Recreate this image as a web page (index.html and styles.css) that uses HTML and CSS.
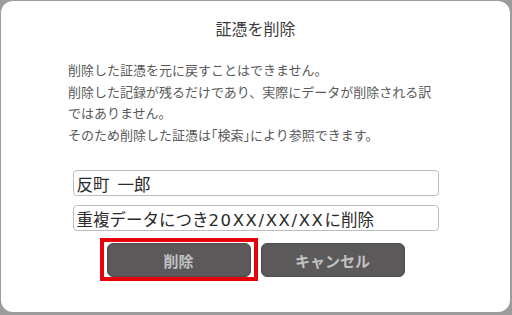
FILE: index.html
```html
<!DOCTYPE html>
<html lang="ja">
<head>
<meta charset="utf-8">
<title>証憑を削除</title>
<link rel="stylesheet" href="styles.css">
</head>
<body>
<div class="dialog">
  <h1 class="title">証憑を削除</h1>
  <p class="message">削除した証憑を元に戻すことはできません。<br>削除した記録が残るだけであり、実際にデータが削除される訳<br>ではありません。<br>そのため削除した証憑は<span class="quote">「</span>検索<span class="quote">」</span>により参照できます。</p>
  <div class="fields">
    <div class="field">反町<span class="gap"> </span>一郎</div>
    <div class="field">重複データにつき<span class="latin">20XX/XX/XX</span>に削除</div>
  </div>
  <div class="actions">
    <button class="btn btn-delete" type="button">削除<span class="highlight"></span></button>
    <button class="btn" type="button">キャンセル</button>
  </div>
</div>
</body>
</html>
```

FILE: styles.css
```css
html, body {
  margin: 0;
  padding: 0;
}
body {
  width: 512px;
  height: 315px;
  background: #9c9c9c;
  font-family: "Noto Sans CJK JP", "Noto Sans", sans-serif;
  overflow: hidden;
}
.dialog {
  box-sizing: border-box;
  width: 509px;
  height: 311px;
  margin: 1px 2px 3px 1px;
  background: #fff;
  border-radius: 12px;
  display: flex;
  flex-direction: column;
}
.title {
  margin: 17px 0 0;
  font-size: 16px;
  line-height: 20px;
  font-weight: 400;
  color: #3c3c3c;
  text-align: center;
}
.message {
  margin: 21px 0 0 67px;
  font-size: 13px;
  line-height: 21.5px;
  color: #5a5a5a;
}
.quote {
  font-feature-settings: "halt";
}
.fields {
  margin-top: 25px;
  display: flex;
  flex-direction: column;
  align-items: center;
  gap: 9px;
}
.field {
  box-sizing: border-box;
  width: 366px;
  height: 26px;
  border: 1px solid #bdbdbd;
  border-radius: 4px;
  padding: 1px 3px 0;
  font-size: 16.5px;
  line-height: 24px;
  color: #2a2a2a;
  white-space: nowrap;
}
.gap {
  font-family: "DejaVu Sans", sans-serif;
  display: inline-block;
  width: 8px;
}
.latin {
  font-family: "DejaVu Sans", "Noto Sans", sans-serif;
  letter-spacing: 1.6px;
}
.actions {
  margin-top: 12px;
  display: flex;
  justify-content: center;
  gap: 10px;
}
.btn {
  position: relative;
  box-sizing: border-box;
  width: 144px;
  height: 34px;
  border: 1px solid #4e4c4d;
  border-radius: 6px;
  background: #5b595a;
  color: #c3c3c3;
  font-family: "Noto Sans CJK JP", "Noto Sans", sans-serif;
  font-size: 15px;
  font-weight: 700;
  padding: 0;
}
.highlight {
  position: absolute;
  left: -8px;
  right: -8px;
  top: -6px;
  bottom: -5px;
  border: 4px solid #e8000b;
  pointer-events: none;
}
```
